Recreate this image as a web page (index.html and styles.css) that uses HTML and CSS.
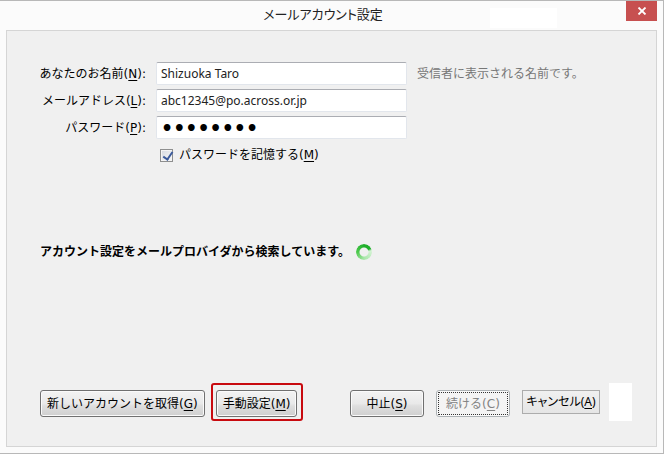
FILE: index.html
```html
<!DOCTYPE html>
<html lang="ja">
<head>
    <meta charset="UTF-8">
    <meta name="viewport" content="width=device-width, initial-scale=1.0">
    <title>メールアカウント設定</title>
    <link rel="stylesheet" href="styles.css">
</head>
<body>
    <div class="window">
        <header class="titlebar">
            <h1 class="title">メールアカウント設定</h1>
            <span class="title-patch"></span>
            <button class="close" type="button" aria-label="閉じる">
                <svg width="10" height="8" viewBox="0 0 10 8"><path d="M1.5 0.5L8.5 7.5M8.5 0.5L1.5 7.5" stroke="#fff" stroke-width="1.8"/></svg>
            </button>
        </header>

        <form class="panel">
            <div class="fields">
                <label for="name">あなたのお名前(<u>N</u>):</label>
                <input class="text" id="name" type="text" value="Shizuoka Taro">
                <span class="hint">受信者に表示される名前です。</span>

                <label for="mail">メールアドレス(<u>L</u>):</label>
                <input class="text" id="mail" type="text" value="abc12345@po.across.or.jp">

                <label for="password">パスワード(<u>P</u>):</label>
                <input class="text password" id="password" type="password" value="password">

                <div class="remember">
                    <input class="check" id="remember" type="checkbox" checked>
                    <label for="remember">パスワードを記憶する(<u>M</u>)</label>
                </div>
            </div>

            <div class="status">
                <span>アカウント設定をメールプロバイダから検索しています。</span>
                <span class="spinner"></span>
            </div>

            <div class="buttons">
                <button class="btn" type="button">新しいアカウントを取得(<u>G</u>)</button>
                <div class="highlight">
                    <button class="btn" type="button">手動設定(<u>M</u>)</button>
                </div>
                <div class="actions">
                    <button class="btn btn-wide" type="button">中止(<u>S</u>)</button>
                    <button class="btn btn-wide btn-disabled" type="button" disabled>続ける(<u>C</u>)</button>
                    <button class="btn-flat" type="button">キャンセル(<u>A</u>)</button>
                </div>
                <span class="patch"></span>
            </div>
        </form>
    </div>
</body>
</html>
```

FILE: styles.css
```css
* {
    box-sizing: border-box;
}
body {
    margin: 0;
    font-family: "DejaVu Sans", "Noto Sans CJK JP", sans-serif;
    font-size: 12px;
    line-height: 16px;
    color: #000;
}
button, input {
    font: inherit;
    color: inherit;
}
u {
    text-underline-offset: 2px;
}
.window {
    display: flex;
    flex-direction: column;
    min-height: 100vh;
    padding-bottom: 6px;
    background: #fbfbfb;
    border: solid #b8b8b8;
    border-width: 1px 1px 1px 0;
}
.titlebar {
    position: relative;
    display: flex;
    align-items: flex-start;
    height: 29px;
    padding-right: 6px;
}
.title {
    flex: 1;
    margin: 0;
    padding: 4px 0 0 20px;
    font-size: 13px;
    line-height: 20px;
    font-weight: normal;
    text-align: center;
    font-feature-settings: "palt";
    color: #222;
}
.title-patch {
    position: absolute;
    top: 7px;
    right: 106px;
    width: 67px;
    height: 20px;
    background: #fff;
}
.close {
    display: flex;
    align-items: center;
    justify-content: center;
    width: 31px;
    height: 20px;
    padding: 0;
    border: 0;
    background: #c75050;
}
.panel {
    flex: 1;
    display: flex;
    flex-direction: column;
    margin: 0 6px;
    padding: 31px 24px 25px 33px;
    background: #f0f0f0;
    border: 1px solid #d5d5d5;
}
.fields {
    display: grid;
    grid-template-columns: 106px 251px 1fr;
    gap: 4px 10px;
    align-items: center;
}
.fields > label {
    grid-column: 1;
    justify-self: end;
    white-space: nowrap;
}
.text {
    width: 100%;
    height: 23px;
    padding: 0 4px;
    font-family: "Noto Sans", "Noto Sans CJK JP", sans-serif;
    color: #222;
    background: #fff;
    border: 1px solid #e2e6ec;
    border-top-color: #abadb3;
    border-radius: 2px;
}
.password {
    font-family: "DejaVu Sans", sans-serif;
    font-size: 19px;
    font-weight: bold;
    color: #000;
}
.hint {
    color: #777;
}
.remember {
    grid-column: 2;
    display: flex;
    align-items: center;
    gap: 6px;
    height: 24px;
    padding-left: 4px;
}
.check {
    appearance: none;
    width: 13px;
    height: 13px;
    margin: 0;
    border: 1px solid #8e8f8f;
    background: linear-gradient(135deg, #d5d9e0, #f8f8f8);
    box-shadow: inset 0 0 0 1px #f4f4f4;
}
.check:checked::before {
    content: "";
    display: block;
    width: 4px;
    height: 8px;
    margin: 0 0 0 4px;
    border: solid #3b5a9b;
    border-width: 0 2px 2px 0;
    transform: rotate(35deg);
}
.status {
    display: flex;
    align-items: center;
    gap: 6px;
    margin-top: 77px;
    font-weight: bold;
}
.spinner {
    width: 16px;
    height: 16px;
    border-radius: 50%;
    background: conic-gradient(#1fae2b 0deg 60deg, #d4f2d4 80deg, #a8e6a8 180deg, #4cc94c 270deg, #1fae2b 360deg);
    mask: radial-gradient(circle, transparent 4px, #000 5px);
}
.buttons {
    display: flex;
    align-items: flex-start;
    margin-top: auto;
}
.buttons > .btn, .actions {
    margin-top: 7px;
}
.btn {
    height: 27px;
    padding: 0 6px;
    white-space: nowrap;
    background: linear-gradient(#f3f3f3, #e9e9e9 50%, #dedede 60%, #cfcfcf);
    border: 1px solid #707070;
    border-radius: 3px;
    box-shadow: inset 0 0 0 1px #fafafa;
}
.btn-wide {
    width: 74px;
}
.btn-disabled {
    color: #838383;
    background: #f4f4f4;
    border-color: #adb2b5;
    outline: 1px dotted #333;
    outline-offset: -3px;
}
.highlight {
    display: flex;
    margin-left: 6px;
    padding: 5px 4px 2px 3px;
    border: 2px solid #c80a0f;
    border-radius: 3px;
}
.actions {
    display: flex;
    gap: 12px;
    margin-left: auto;
}
.btn-flat {
    width: 78px;
    height: 24px;
    padding: 0;
    white-space: nowrap;
    font-family: "Noto Sans", "Noto Sans CJK JP", sans-serif;
    font-feature-settings: "palt";
    background: linear-gradient(#f0f0f0, #e5e5e5);
    border: 1px solid #acacac;
}
.patch {
    width: 23px;
    height: 38px;
    margin-left: 9px;
    background: #fff;
}
```
